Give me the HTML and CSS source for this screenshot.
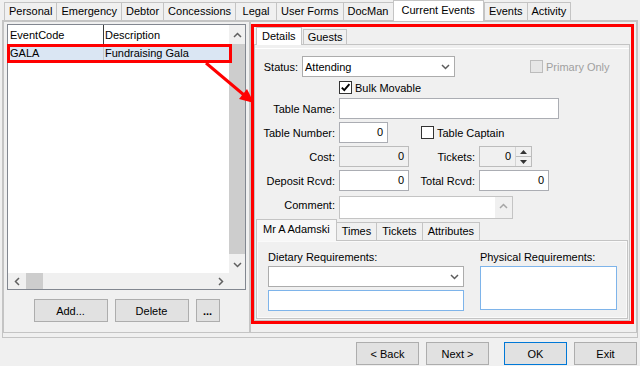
FILE: index.html
```html
<!doctype html>
<html lang="en">
  <head>
    <meta charset="UTF-8" />
    <meta name="viewport" content="width=device-width, initial-scale=1.0" />
    <title>Current Events</title>
    <link rel="stylesheet" href="styles.css">
  </head>
  <body>
    <div id="window">
      <!-- Main tabs -->
      <div class="tabs">
        <span class="tab">Personal</span>
        <span class="tab">Emergency</span>
        <span class="tab">Debtor</span>
        <span class="tab">Concessions</span>
        <span class="tab">Legal</span>
        <span class="tab">User Forms</span>
        <span class="tab">DocMan</span>
        <span class="tab active">Current Events</span>
        <span class="tab">Events</span>
        <span class="tab">Activity</span>
      </div>

      <div class="tab-page">
        <!-- Event list -->
        <div class="list-box">
          <div class="grid">
            <div class="grid-body">
              <div class="grid-head">
                <span class="col-code">EventCode</span>
                <span class="col-desc">Description</span>
              </div>
              <div class="grid-row selected flagged">
                <span class="col-code">GALA</span>
                <span class="col-desc">Fundraising Gala</span>
              </div>
            </div>
            <div class="vscroll">
              <span class="sb-btn sb-up">
                <svg width="9" height="6" viewBox="0 0 9 6"><path d="M1 5 L4.5 1.5 L8 5" fill="none" stroke="#606060" stroke-width="1.5"/></svg>
              </span>
              <span class="sb-thumb"></span>
              <span class="sb-btn">
                <svg width="9" height="6" viewBox="0 0 9 6"><path d="M1 1 L4.5 4.5 L8 1" fill="none" stroke="#606060" stroke-width="1.5"/></svg>
              </span>
            </div>
            <div class="hscroll">
              <span class="sb-btn">
                <svg width="6" height="9" viewBox="0 0 6 9"><path d="M5 1 L1.5 4.5 L5 8" fill="none" stroke="#606060" stroke-width="1.5"/></svg>
              </span>
              <span class="sb-thumb"></span>
              <span class="sb-btn">
                <svg width="6" height="9" viewBox="0 0 6 9"><path d="M1 1 L4.5 4.5 L1 8" fill="none" stroke="#606060" stroke-width="1.5"/></svg>
              </span>
            </div>
            <div class="corner"></div>
          </div>
          <div class="list-buttons">
            <button class="btn btn-list">Add...</button>
            <button class="btn btn-list">Delete</button>
            <button class="btn btn-more">...</button>
          </div>
        </div>

        <!-- Event details -->
        <div class="detail-box">
          <div class="annot">
            <div class="subtabs">
              <span class="subtab active">Details</span>
              <span class="subtab">Guests</span>
            </div>
            <div class="subpage">
              <div class="status-row">
                <span class="status-label">Status:</span>
                <div class="combo status-combo">
                  <span>Attending</span>
                  <svg width="9" height="6" viewBox="0 0 9 6"><path d="M1 1 L4.5 4.5 L8 1" fill="none" stroke="#5c5c5c" stroke-width="1.5"/></svg>
                </div>
                <span class="check disabled primary-only"><span class="box"></span>Primary Only</span>
              </div>

              <div class="bulk-row">
                <span class="check">
                  <span class="box">
                    <svg width="11" height="11" viewBox="0 0 11 11"><path d="M1.8 5.6 L4.3 8.2 L9.4 2.2" fill="none" stroke="#000" stroke-width="1.9"/></svg>
                  </span>Bulk Movable
                </span>
              </div>

              <div class="fields">
                <div class="field-row">
                  <span class="lbl">Table Name:</span>
                  <span class="input w-name"></span>
                </div>
                <div class="field-row">
                  <span class="lbl">Table Number:</span>
                  <span class="input w-num">0</span>
                  <span class="check captain"><span class="box"></span>Table Captain</span>
                </div>
                <div class="field-row">
                  <span class="lbl">Cost:</span>
                  <span class="input w-money disabled">0</span>
                  <span class="lbl2">Tickets:</span>
                  <div class="spin">
                    <span class="spin-value">0</span>
                    <span class="spin-btns">
                      <span class="spin-half">
                        <svg width="7" height="4" viewBox="0 0 7 4"><path d="M0 4 L3.5 0 L7 4Z" fill="#333"/></svg>
                      </span>
                      <span class="spin-half">
                        <svg width="7" height="4" viewBox="0 0 7 4"><path d="M0 0 L3.5 4 L7 0Z" fill="#333"/></svg>
                      </span>
                    </span>
                  </div>
                </div>
                <div class="field-row">
                  <span class="lbl">Deposit Rcvd:</span>
                  <span class="input w-money">0</span>
                  <span class="lbl2">Total Rcvd:</span>
                  <span class="input w-money">0</span>
                </div>
                <div class="field-row comment-row">
                  <span class="lbl">Comment:</span>
                  <div class="memo">
                    <span class="memo-scroll">
                      <svg width="9" height="6" viewBox="0 0 9 6"><path d="M1 5 L4.5 1.5 L8 5" fill="none" stroke="#a6a6a6" stroke-width="1.5"/></svg>
                    </span>
                  </div>
                </div>
              </div>

              <!-- Guest tabs -->
              <div class="inner-tabs">
                <span class="itab active">Mr A Adamski</span>
                <span class="itab">Times</span>
                <span class="itab">Tickets</span>
                <span class="itab">Attributes</span>
              </div>
              <div class="inner-page">
                <div class="req-col diet-col">
                  <span class="req-label">Dietary Requirements:</span>
                  <div class="combo">
                    <span></span>
                    <svg width="9" height="6" viewBox="0 0 9 6"><path d="M1 1 L4.5 4.5 L8 1" fill="none" stroke="#5c5c5c" stroke-width="1.5"/></svg>
                  </div>
                  <span class="input focus"></span>
                </div>
                <div class="req-col phys-col">
                  <span class="req-label">Physical Requirements:</span>
                  <span class="input focus phys-box"></span>
                </div>
              </div>
            </div>
          </div>
        </div>
      </div>

      <!-- Dialog buttons -->
      <div class="footer">
        <button class="btn btn-footer">&lt; Back</button>
        <button class="btn btn-footer">Next &gt;</button>
        <button class="btn btn-footer ok">OK</button>
        <button class="btn btn-footer">Exit</button>
      </div>

      <!-- Annotation arrow -->
      <svg class="arrow" width="640" height="366" viewBox="0 0 640 366">
        <line x1="206" y1="63" x2="244" y2="95" stroke="#f00" stroke-width="3"/>
        <polygon points="254,103 239,99 247,89" fill="#f00"/>
      </svg>
    </div>
  </body>
</html>
```

FILE: styles.css
```css
/* General */
*,
*::before,
*::after {
  box-sizing: border-box;
}

body {
  margin: 0;
  background-color: #f0f0f0;
  font-family: "Liberation Sans", Arial, sans-serif;
  font-size: 11px;
  color: #000;
}

#window {
  position: relative;
  width: 640px;
  height: 366px;
  padding: 0 2px;
  display: flex;
  flex-direction: column;
  overflow: hidden;
}

/* Main tabs */
.tabs {
  display: flex;
  align-items: flex-end;
  height: 20px;
  padding-left: 2px;
}

.tab {
  min-width: 42px;
  height: 18px;
  line-height: 17px;
  padding: 0 4px;
  border: 1px solid #c4c4c4;
  border-bottom: none;
  margin-right: -1px;
  text-align: center;
  white-space: nowrap;
}

.tab.active {
  position: relative;
  z-index: 1;
  height: 21px;
  margin: 0 0 -1px 0;
  padding: 0 8px;
  line-height: 19px;
  background-color: #fff;
}

.tab-page {
  height: 318px;
  border: 1px solid #c4c4c4;
  padding-bottom: 4px;
  display: flex;
}

/* Event list */
.list-box {
  flex: 0 0 247px;
  border: 1px solid #c4c4c4;
  padding: 2px 3px;
  display: flex;
  flex-direction: column;
}

.grid {
  height: 266px;
  border: 1px solid #828790;
  display: grid;
  grid-template-columns: 1fr 16px;
  grid-template-rows: 1fr 16px;
  background-color: #fff;
}

.grid-head,
.grid-row {
  display: flex;
  white-space: nowrap;
}

.grid-head {
  height: 19px;
  line-height: 20px;
}

.grid-row {
  height: 18px;
  line-height: 18px;
}

.col-code {
  width: 96px;
  padding-left: 2px;
  border-right: 1px solid #c8c8c8;
}

.grid-head .col-code {
  border-right-color: #3a3a3a;
}

.col-desc {
  padding-left: 1px;
}

.grid-row.selected {
  background-color: #dae6f3;
}

.grid-row.flagged {
  position: relative;
}

.grid-row.flagged::after {
  content: "";
  position: absolute;
  z-index: 2;
  left: -1px;
  top: 0;
  width: 225px;
  height: 19px;
  border: 3px solid #f00;
}

.vscroll,
.hscroll,
.corner {
  background-color: #f0f0f0;
}

.vscroll {
  display: flex;
  flex-direction: column;
}

.hscroll {
  display: flex;
}

.sb-btn {
  display: flex;
  align-items: center;
  justify-content: center;
  flex: 0 0 17px;
}

.vscroll .sb-up {
  flex-basis: 19px;
}

.vscroll .sb-thumb {
  height: 210px;
  margin-bottom: auto;
  background-color: #cdcdcd;
}

.hscroll .sb-thumb {
  width: 17px;
  margin: 0 auto 0 1px;
  background-color: #cdcdcd;
}

.list-buttons {
  display: flex;
  justify-content: center;
  gap: 7px;
  margin-top: 9px;
}

/* Buttons */
.btn {
  height: 23px;
  padding: 0;
  border: 1px solid #adadad;
  background-color: #e1e1e1;
  font-family: inherit;
  font-size: 11px;
  color: #000;
}

.btn-list {
  width: 74px;
}

.btn-more {
  width: 24px;
  font-weight: bold;
}

/* Details */
.detail-box {
  flex: 1;
  min-width: 0;
  border: 1px solid #c4c4c4;
  display: flex;
  flex-direction: column;
}

.annot {
  flex: 1;
  margin: 2px 2px 8px 0;
  border: 3px solid #f00;
  display: flex;
  flex-direction: column;
}

.subtabs {
  display: flex;
  align-items: flex-end;
  height: 18px;
  padding-left: 2px;
}

.subtab {
  height: 16px;
  line-height: 15px;
  padding: 0 4px;
  border: 1px solid #c4c4c4;
  border-bottom: none;
  white-space: nowrap;
}

.subtab.active {
  position: relative;
  z-index: 1;
  height: 18px;
  line-height: 17px;
  padding: 0 5px;
  margin-right: 1px;
  background-color: #fff;
}

.subpage {
  flex: 1;
  margin: -1px 1px 0 0;
  border: 1px solid #c4c4c4;
  padding-top: 11px;
  display: flex;
  flex-direction: column;
  box-shadow: inset 0 3px 0 #f0f0f0, inset 0 4px 0 #fff;
}

.status-row {
  display: flex;
  align-items: center;
  height: 21px;
}

.status-label {
  width: 47px;
  padding-right: 4px;
  text-align: right;
}

.combo {
  height: 21px;
  border: 1px solid #acacac;
  background-color: #fff;
  display: flex;
  align-items: center;
  justify-content: space-between;
  padding: 0 4px 0 2px;
}

.status-combo {
  width: 153px;
}

.primary-only {
  margin-left: 75px;
}

.check {
  display: inline-flex;
  align-items: center;
  gap: 3px;
  white-space: nowrap;
}

.check .box {
  width: 13px;
  height: 13px;
  border: 1px solid #333;
  background-color: #fff;
  display: flex;
  align-items: center;
  justify-content: center;
}

.check.disabled {
  color: #a0a0a0;
}

.check.disabled .box {
  border-color: #bcbcbc;
  background-color: #e6e6e6;
}

.bulk-row {
  height: 21px;
  padding-left: 84px;
  display: flex;
  align-items: center;
}

.fields {
  display: flex;
  flex-direction: column;
  gap: 3px;
}

.field-row {
  display: flex;
  align-items: center;
  height: 21px;
}

.lbl {
  width: 84px;
  padding-right: 4px;
  text-align: right;
  white-space: nowrap;
}

.lbl2 {
  width: 70px;
  padding-right: 4px;
  text-align: right;
  white-space: nowrap;
}

.input {
  display: block;
  height: 21px;
  line-height: 19px;
  padding: 0 4px;
  border: 1px solid #abadb3;
  background-color: #fff;
  text-align: right;
}

.input.disabled {
  border-color: #bcbcbc;
  background-color: #f0f0f0;
}

.w-name {
  width: 220px;
}

.w-num {
  width: 49px;
}

.w-money {
  width: 70px;
}

.captain {
  margin-left: 33px;
}

.spin {
  width: 53px;
  height: 21px;
  border: 1px solid #bcbcbc;
  background-color: #f0f0f0;
  display: flex;
}

.spin-value {
  flex: 1;
  line-height: 19px;
  text-align: right;
  padding-right: 4px;
}

.spin-btns {
  width: 16px;
  display: flex;
  flex-direction: column;
  border-left: 1px solid #d4d4d4;
}

.spin-half {
  flex: 1;
  display: flex;
  align-items: center;
  justify-content: center;
}

.spin-half + .spin-half {
  border-top: 1px solid #bcbcbc;
}

.comment-row {
  height: 23px;
  margin-top: 2px;
  align-items: flex-start;
}

.comment-row .lbl {
  padding-top: 3px;
}

.memo {
  width: 174px;
  height: 23px;
  border: 1px solid #c4c4c4;
  background-color: #fff;
  display: flex;
  justify-content: flex-end;
}

.memo-scroll {
  width: 17px;
  background-color: #f0f0f0;
  display: flex;
  justify-content: center;
  padding-top: 6px;
}

/* Guest tabs */
.inner-tabs {
  display: flex;
  align-items: flex-end;
  height: 21px;
  padding-left: 1px;
}

.itab {
  height: 18px;
  line-height: 17px;
  padding: 0 5px;
  border: 1px solid #c4c4c4;
  border-bottom: none;
  margin-left: -1px;
  white-space: nowrap;
}

.itab.active {
  position: relative;
  z-index: 1;
  height: 22px;
  line-height: 19px;
  margin-left: 0;
  margin-bottom: -1px;
  padding: 0 6px;
  background-color: #f7f7f7;
}

.inner-page {
  flex: 1;
  margin: 0 1px 1px 1px;
  border: 1px solid #c4c4c4;
  padding: 9px 10px 0 11px;
  display: flex;
  gap: 16px;
  box-shadow: inset 0 0 0 1px #fafafa;
}

.req-col {
  display: flex;
  flex-direction: column;
}

.diet-col {
  width: 200px;
  gap: 3px;
}

.diet-col .combo {
  margin-top: -1px;
}

.phys-col {
  width: 140px;
  gap: 2px;
}

.req-label {
  line-height: 14px;
  white-space: nowrap;
}

.input.focus {
  border-color: #7eb4ea;
}

.phys-box {
  height: 44px;
}

/* Dialog buttons */
.footer {
  display: flex;
  justify-content: flex-end;
  gap: 7px;
  margin-top: 4px;
  padding-right: 1px;
}

.btn-footer {
  width: 63px;
}

.btn-footer.ok {
  margin-left: 8px;
  border-color: #0078d7;
}

/* Annotation arrow */
.arrow {
  position: absolute;
  top: 0;
  left: 0;
  pointer-events: none;
}
```
